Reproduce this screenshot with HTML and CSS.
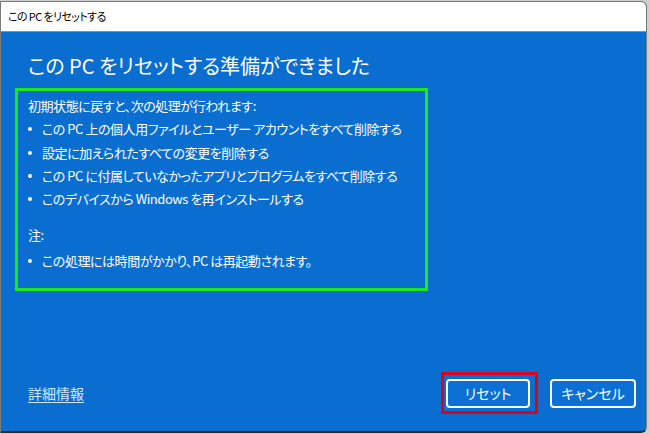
FILE: index.html
```html
<!DOCTYPE html>
<html lang="ja">
<head>
<meta charset="utf-8">
<title>この PC をリセットする</title>
<link rel="stylesheet" href="styles.css">
</head>
<body>
<div class="window">
  <div class="titlebar">この PC をリセットする</div>
  <div class="content">
    <h1 class="heading">この PC をリセットする準備ができました</h1>
    <div class="infobox">
      <p class="line">初期状態に戻すと、次の処理が行われます:</p>
      <ul class="list">
        <li>この PC 上の個人用ファイルとユーザー アカウントをすべて削除する</li>
        <li>設定に加えられたすべての変更を削除する</li>
        <li>この PC に付属していなかったアプリとプログラムをすべて削除する</li>
        <li>このデバイスから Windows を再インストールする</li>
      </ul>
      <p class="line note">注:</p>
      <ul class="list last">
        <li>この処理には時間がかかり、PC は再起動されます。</li>
      </ul>
    </div>
    <div class="footer">
      <a class="link" href="#">詳細情報</a>
      <div class="buttons">
        <button class="btn btn-reset">リセット</button>
        <button class="btn">キャンセル</button>
      </div>
    </div>
  </div>
</div>
</body>
</html>
```
FILE: styles.css
```css
* { box-sizing: border-box; }
html, body { margin: 0; padding: 0; }
body {
  width: 650px;
  height: 434px;
  background: #cfcfcf;
  font-family: "Noto Sans CJK JP", "Noto Sans", sans-serif;
  font-feature-settings: "palt";
  overflow: hidden;
}
.window {
  margin: 1px 0 0 0;
  width: 647px;
  height: 432px;
  border: 1px solid #7a7a7a;
  border-bottom: 2px solid #2a2a2a;
  border-radius: 0 6px 6px 0;
  overflow: hidden;
  display: flex;
  flex-direction: column;
  background: #0a6ed1;
}
.titlebar {
  height: 30px;
  flex: none;
  background: #ffffff;
  border-bottom: 1px solid #5b9be0;
  color: #000;
  font-size: 11px;
  letter-spacing: -0.6px;
  line-height: 29px;
  padding-left: 7px;
}
.content {
  flex: 1;
  display: flex;
  flex-direction: column;
  padding: 19px 10px 0 14px;
  color: #ffffff;
}
.heading {
  margin: 0 0 7px 13px;
  font-size: 20px;
  font-weight: 400;
  line-height: 30px;
  white-space: nowrap;
}
.infobox {
  width: 413px;
  border: 3px solid #1ee626;
  padding: 3px 10px 16px 10px;
  font-size: 13px;
  letter-spacing: -0.45px;
  line-height: 23.3px;
  white-space: nowrap;
}
.line { margin: 0; }
.note { margin-top: 13px; }
.list {
  margin: 0;
  padding: 0;
  list-style: none;
}
.list li {
  position: relative;
  padding-left: 14px;
}
.list li::before {
  content: "";
  position: absolute;
  left: 0;
  top: 10px;
  width: 4px;
  height: 4px;
  border-radius: 50%;
  background: #ffffff;
}
.last { margin-top: 2px; }
.footer {
  margin-top: auto;
  height: 70px;
  display: flex;
  align-items: center;
  justify-content: space-between;
  padding: 0 0 6px 13px;
}
.link {
  color: #d4e7ff;
  font-size: 14px;
  text-decoration: underline;
  text-underline-offset: 3px;
}
.buttons {
  display: flex;
  gap: 20px;
}
.btn {
  position: relative;
  height: 29px;
  border: 2px solid #ffffff;
  border-radius: 4px;
  background: #0b6fd3;
  color: #ffffff;
  font-family: inherit;
  font-feature-settings: "palt";
  font-size: 14px;
  line-height: 23px;
  padding: 0;
  width: 86px;
}
.btn-reset { width: 84px; }
.btn-reset::after {
  content: "";
  position: absolute;
  left: -7px;
  right: -10px;
  top: -9px;
  bottom: -8px;
  border: 3px solid #e0001a;
}
```
